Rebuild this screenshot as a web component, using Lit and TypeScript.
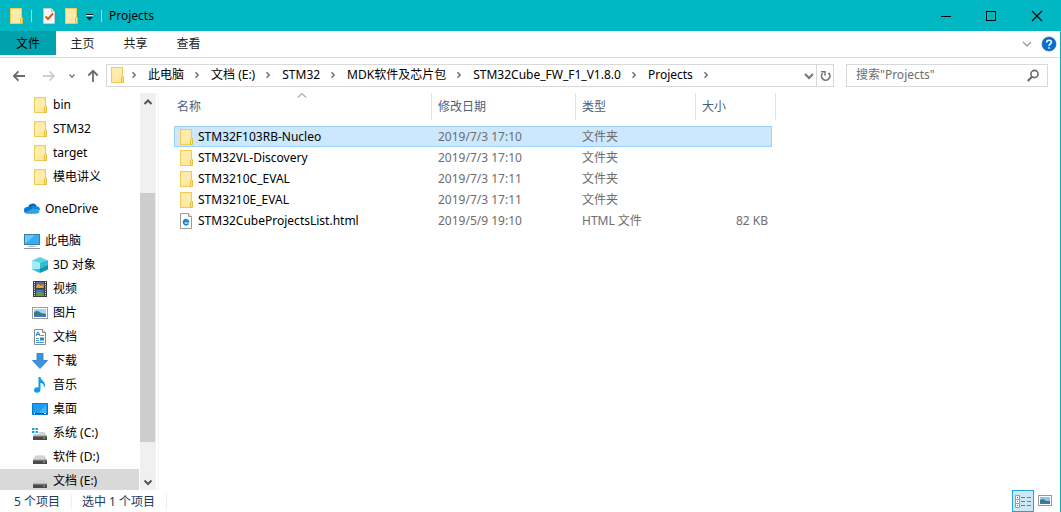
import { LitElement, html, svg, css } from "lit";
import { customElement, state } from "lit/decorators.js";
import { classMap } from "lit/directives/class-map.js";

const glyphs = {
  folder: svg`<rect x="2.5" y="0.5" width="11" height="15" fill="#ffe9a0" stroke="#efcb58"/>
    <path d="M4 2h8v6l-8 5z" fill="#fff0b8" opacity=".5"/>
    <path d="M12.5 15.500v-5l1-1h1v6z" fill="#ffe48c" stroke="#e6bc3c"/>`,
  onedrive: svg`<path d="M4 6.200A4.800 4.800 0 0 1 12.800 5l-5 3z" fill="#0a5cb0"/>
    <path d="M0 9.400A3.300 3.300 0 0 1 3.400 6a4 4 0 0 1 4 .2L12 12.400H3A3 3 0 0 1 0 9.400z" fill="#0f79d3"/>
    <path d="M7 5.800A4.200 4.200 0 0 1 13 5.600 3.400 3.400 0 0 1 16 9l-7-.4z" fill="#1583dc"/>
    <path d="M1.200 11.600 9 7.600l6.800 2.200a2.800 2.800 0 0 1-2.600 2.600H3a3 3 0 0 1-1.800-.8z" fill="#29a5ea"/>`,
  pc: svg`<rect x="0.5" y="1.5" width="15" height="10" fill="#35abf5" stroke="#3b7ba6"/>
    <path d="M1 11 11 2H1z" fill="#6cc6fb"/><path d="M6 12h4v2H6z" fill="#dfe5e9"/>
    <path d="M4 13.500h8" stroke="#b4bec6"/><path d="M0 15.500h16" stroke="#8d9aa5"/>`,
  cube: svg`<path d="M0 3.5 8 6v10L0 12.6z" fill="#28bcd0"/><path d="M8 6l8-2.5v9.1L8 16z" fill="#0896b4"/>
    <path d="M0 3.5 8 0l8 3.5L8 6z" fill="#5fd3df"/><path d="M0 3.500 8 6v6L0 12.600z" fill="#a4edf3"/>
    <path d="M8 6l8-2.500V8L8 12z" fill="#2cbdd2"/>`,
  video: svg`<path d="M1 0h14v16H1z" fill="#3c3c3c"/><path d="M4 1h8v6H4z" fill="#5266a8"/><path d="M4 8.500h8V15H4z" fill="#3f6bd0"/>
    <path d="M4.500 5c1-3 3-3 4 0l3-2v4h-7z" fill="#d8aa30"/><path d="M7 2h3v2H7z" fill="#d84a30"/><path d="M4 12l4-2 4 3v2H4z" fill="#5aa04a"/>
    <path d="M2.500 1v14M13.500 1v14" stroke="#fff" stroke-dasharray="1 1.2"/>`,
  picture: svg`<rect x=".5" y="2.500" width="15" height="11" fill="#fff" stroke="#9b9b9b"/>
    <path d="M2 4h12v8H2z" fill="#a9d3f5"/><path d="M2 7c3-2 5-1 7 1l5 1v3H2z" fill="#3f7a78"/><path d="M2 10l12-.5V12H2z" fill="#3d78bd"/>`,
  doc: svg`<path d="M2.500.5h8l3 3v12h-11z" fill="#fff" stroke="#8a8a8a"/><path d="M10.500.5v3h3" fill="#e4e4e4" stroke="#8a8a8a"/>
    <path d="M4 7 5.500 3h1L8 7M4.500 5.500h3" stroke="#2c86c8" fill="none"/><path d="M8.500 6.500H12M4 9.500h3M4 11.500h3M4 13.500h8" stroke="#3d9ad2"/><path d="M8 8.500h4v3H8z" fill="#2f8a94"/>`,
  download: svg`<path d="M5 .5h6v7h4.500L8 15.500.5 7.500H5z" fill="#3c94e0" stroke="#2878c0" stroke-width=".8"/>`,
  music: svg`<path d="M6.500 0h2c.3 3.500 4.500 4 4.500 8 0 1-.3 2-1 2.600.2-3-1.500-4.600-3.500-4.800v6.700c0 2-1.700 3.300-3.500 3.300C3.500 15.800 2 15 2 13.300c0-2.300 2.400-3.500 4.500-2.800z" fill="#0f9bec"/>`,
  desktop: svg`<path d="M.5 2.500h15v11H.5z" fill="#1e9df2" stroke="#0a78c8"/><path d="M6 13 14 4v9z" fill="#49b4fa"/>
    <path d="M1 12.500h14" stroke="#075aa0"/><path d="M2 12.500h1M12 12.500h2" stroke="#fff"/>`,
  drive: svg`<path d="M3.500 6.500h9L15 11H1z" fill="#d2d2d2"/><path d="M1 11h14v4H1z" fill="#4a4a4a"/><path d="M1 11h14" stroke="#9c9c9c"/><path d="M11 12.500h2v1h-2z" fill="#52e060"/>`,
  system: svg`<path d="M0 3h2.500v2H0zM3.500 3H6v2H3.500zM0 6h2.500v2H0zM3.500 6H6v2H3.500z" fill="#17a8ea"/>
    <path d="M7 7h5.500l2.500 4H1l1.500-2H7z" fill="#d2d2d2"/><path d="M1 11h14v4H1z" fill="#4a4a4a"/><path d="M1 11h14" stroke="#9c9c9c"/><path d="M11 12.500h2v1h-2z" fill="#52e060"/>`,
  page: svg`<path d="M2.500.5h8l3 3v12h-11z" fill="#fff" stroke="#9a9a9a"/><path d="M10.500.5v3h3" fill="#eee" stroke="#9a9a9a"/>
    <path d="M10.300 10.400A2.500 2.500 0 1 1 10.500 8.600H5.800" fill="none" stroke="#1583d8" stroke-width="1.700"/>`,
  check: svg`<path d="M2.500.5h8l3 3v12h-11z" fill="#fbfbfb" stroke="#c9c9c9"/><path d="M10.500.5v3h3" fill="#e2e2e2" stroke="#b9b9b9"/>
    <path d="M4.500 8.500 7 11l5-5.500" fill="none" stroke="#e2541c" stroke-width="2"/>`,
  customize: svg`<path d="M5 6.500h7" stroke="#111"/><path d="M5 7.500h7" stroke="#fff" opacity=".8"/><path d="M5 9h7l-3.500 3.500z" fill="#111"/>`,
  minimize: svg`<path d="M4 8.500h10" stroke="#000"/>`,
  maximize: svg`<rect x="3.500" y="3.500" width="9" height="9" fill="none" stroke="#000"/>`,
  close: svg`<path d="M3 3l10 10M13 3 3 13" stroke="#000" stroke-width="1.100"/>`,
  back: svg`<path d="M14 8H3M7.500 3.300 2.800 8l4.700 4.700" fill="none" stroke="#6a6a6a" stroke-width="1.800"/>`,
  forward: svg`<path d="M2 8h11M8.500 3.300 13.200 8l-4.700 4.700" fill="none" stroke="#d0d0d0" stroke-width="1.800"/>`,
  up: svg`<path d="M8 14V3M3.300 7.500 8 2.800l4.700 4.700" fill="none" stroke="#6a6a6a" stroke-width="1.800"/>`,
  recent: svg`<path d="M5.500 6.500 8 9l2.500-2.500" fill="none" stroke="#808080" stroke-width="1.600"/>`,
  crumb: svg`<path d="M6.500 5.200 9.200 8l-2.700 2.800" fill="none" stroke="#707070" stroke-width="1.500"/>`,
  down: svg`<path d="M5 6l4 4 4-4" fill="none" stroke="#757575" stroke-width="2"/>`,
  ribbon: svg`<path d="M4 6l4 4 4-4" fill="none" stroke="#9a9a9a" stroke-width="1.300"/>`,
  refresh: svg`<path d="M11.500 4.800A4.200 4.200 0 1 1 5.500 5.200" fill="none" stroke="#757575" stroke-width="1.700"/><path d="M4 3.700h4v4" fill="none" stroke="#757575" stroke-width="1.400"/>`,
  search: svg`<circle cx="9.500" cy="6" r="3.600" fill="none" stroke="#666" stroke-width="1.600"/><path d="M7 8.800 2.800 13" stroke="#666" stroke-width="2"/>`,
  help: svg`<circle cx="8" cy="8" r="7" fill="#0b6fd0" stroke="#084f9c" stroke-width=".6"/>
    <path d="M5.700 6.500c0-3 4.700-3 4.700-.3C10.400 8 8.100 7.800 8.100 10M8.100 11.200v1.600" fill="none" stroke="#fff" stroke-width="1.600"/>`,
  scrollUp: svg`<path d="M4.500 10 8 6.500l3.500 3.500" fill="none" stroke="#555" stroke-width="2"/>`,
  scrollDown: svg`<path d="M4.500 6.500 8 10l3.500-3.500" fill="none" stroke="#555" stroke-width="2"/>`,
  sort: svg`<path d="M4 9.500 8 5.500l4 4" fill="none" stroke="#707070"/>`,
  details: svg`<path d="M.5 2.500h4v4h-4zM.5 6.500h4v4h-4zM.5 10.500h4v4h-4z" fill="#fff" stroke="#999"/>
    <path d="M2 4.500h1" stroke="#444"/><path d="M2 8.500h1" stroke="#3878d0"/><path d="M2 12.500h1" stroke="#c03030"/>
    <path d="M6 4.500h4M12 4.500h4M6 8.500h4M12 8.500h4M6 12.500h4M12 12.500h4" stroke="#707b84"/>`,
  thumbs: svg`<rect x="1.500" y="2.500" width="13" height="10" fill="#fff" stroke="#999"/><path d="M3 4h10v7H3z" fill="#8cc4f4"/>
    <path d="M3 7c3-1 4-1 6 1l4 0v3H3z" fill="#3f7a70"/><path d="M3 9.500h10V11H3z" fill="#3d78bd"/>`,
};
type Glyph = keyof typeof glyphs;

const icon = (name: Glyph) =>
  html`<svg class="icon" viewBox="0 0 16 16" width="16" height="16" aria-hidden="true">${glyphs[name]}</svg>`;

interface Place { label: string; glyph: Glyph; root?: boolean; }
interface Entry { name: string; glyph: Glyph; date: string; type: string; size: string; }

const PLACES: Place[] = [
  { label: "bin", glyph: "folder" },
  { label: "STM32", glyph: "folder" },
  { label: "target", glyph: "folder" },
  { label: "模电讲义", glyph: "folder" },
  { label: "OneDrive", glyph: "onedrive", root: true },
  { label: "此电脑", glyph: "pc", root: true },
  { label: "3D 对象", glyph: "cube" },
  { label: "视频", glyph: "video" },
  { label: "图片", glyph: "picture" },
  { label: "文档", glyph: "doc" },
  { label: "下载", glyph: "download" },
  { label: "音乐", glyph: "music" },
  { label: "桌面", glyph: "desktop" },
  { label: "系统 (C:)", glyph: "system" },
  { label: "软件 (D:)", glyph: "drive" },
  { label: "文档 (E:)", glyph: "drive" },
];

const CRUMBS = ["此电脑", "文档 (E:)", "STM32", "MDK软件及芯片包", "STM32Cube_FW_F1_V1.8.0", "Projects"];

const ENTRIES: Entry[] = [
  { name: "STM32F103RB-Nucleo", glyph: "folder", date: "2019/7/3 17:10", type: "文件夹", size: "" },
  { name: "STM32VL-Discovery", glyph: "folder", date: "2019/7/3 17:10", type: "文件夹", size: "" },
  { name: "STM3210C_EVAL", glyph: "folder", date: "2019/7/3 17:11", type: "文件夹", size: "" },
  { name: "STM3210E_EVAL", glyph: "folder", date: "2019/7/3 17:11", type: "文件夹", size: "" },
  { name: "STM32CubeProjectsList.html", glyph: "page", date: "2019/5/9 19:10", type: "HTML 文件", size: "82 KB" },
];

@customElement("app-root")
export class AppRoot extends LitElement {
  @state() private selected = 0;
  @state() private place = 15;

  static styles = css`
    :host {
      display: flex;
      flex-direction: column;
      height: 100vh;
      box-sizing: border-box;
      border-right: 1px solid #00b7c3;
      background: #fff;
      color: #000;
      font: 12px/16px "Noto Sans", "Noto Sans CJK SC", sans-serif;
      overflow: hidden;
    }
    * { box-sizing: border-box; }
    button, input { font: inherit; color: inherit; border: 0; padding: 0; margin: 0; background: none; }
    button { display: inline-flex; align-items: center; justify-content: center; }
    a { color: inherit; text-decoration: none; }
    .icon { display: block; flex: none; }

    .titlebar { display: flex; flex: none; align-items: center; height: 31px; padding-left: 8px; background: #00b7c3; }
    .divider { width: 1px; height: 12px; background: #8fdde2; }
    .quick { display: flex; align-items: center; gap: 7px; padding-right: 4px; }
    .tools { display: flex; gap: 6px; padding-left: 2px; }
    .tools .narrow { margin-left: -4px; }
    .title { margin: 0; padding-left: 7px; font: inherit; }
    .window { display: flex; align-self: stretch; margin-left: auto; }
    .window button { width: 46px; }

    .ribbon { display: flex; flex: none; height: 27px; border-bottom: 1px solid #dadbdc; }
    .ribbon .tab { width: 53px; height: 24px; padding-top: 1px; color: #222; }
    .ribbon .file { width: 56px; background: #00a2ad; color: #000; }
    .ribbon .extra { display: flex; align-items: center; gap: 6px; margin-left: auto; padding-right: 3px; }

    .navbar { display: flex; flex: none; align-items: center; height: 35px; padding: 0 12px 0 11px; }
    .arrows { display: flex; align-items: center; width: 95px; }
    .arrows .forward { margin-left: 14px; }
    .arrows .recent { margin-left: 7px; }
    .arrows .up { margin-left: 5px; }
    .address { display: flex; flex: 1; align-items: center; height: 23px; min-width: 0; padding-left: 2px; border: 1px solid #d9d9d9; }
    .crumbs { display: flex; flex: 1; align-items: center; min-width: 0; margin: 0; padding: 0 0 2px; list-style: none; white-space: nowrap; }
    .crumbs li { display: flex; align-items: center; gap: 5px; padding-left: 6px; }
    .crumbs .start { gap: 1px; padding: 0; }
    .refresh { align-self: stretch; width: 17px; border-left: 1px solid #d9d9d9; }
    .search { display: flex; align-items: center; width: 202px; height: 23px; margin-left: 12px; padding: 0 6px 0 9px; border: 1px solid #d9d9d9; }
    .search input { flex: 1; min-width: 0; padding-bottom: 2px; outline: 0; }
    .search input::placeholder { color: #6d6d6d; opacity: 1; }

    .body { display: flex; flex: 1; min-height: 0; }
    .sidebar { display: flex; flex: none; width: 159px; border-right: 1px solid #f3f3f3; }
    .places { flex: 1; margin: 0; padding: 0; list-style: none; overflow: hidden; }
    .place { display: flex; align-items: center; gap: 5px; height: 24px; padding-left: 32px; }
    .place.root { padding-left: 24px; }
    .root-item { padding-top: 8px; }
    .place.current { background: #d9d9d9; }
    .scrollbar { display: flex; flex-direction: column; width: 16px; margin: 0 2px 0 1px; background: #f0f0f0; }
    .scrollbar button { flex: none; height: 17px; }
    .track { display: flex; flex-direction: column; flex: 1; }
    .before { flex: 83; }
    .thumb { flex: 249; width: 15px; background: #cdcdcd; }
    .after { flex: 31; }

    .files { flex: 1; min-width: 0; padding-left: 15px; overflow: hidden; }
    table { width: 602px; table-layout: fixed; border-spacing: 0; }
    .c-name { width: 257px; }
    .c-date { width: 144px; }
    .c-type { width: 120px; }
    .c-size { width: 77px; }
    th { position: relative; height: 27px; padding: 0 0 0 6px; border-left: 1px solid #e2e2e2; color: #4c607a; font-weight: 400; text-align: left; }
    th.name { padding-left: 3px; border-left: 0; }
    th.end { padding: 0; border-left: 0; border-right: 1px solid #e2e2e2; }
    .sort { position: absolute; top: -5px; left: 50%; margin-left: -9px; }
    .gap td { height: 6px; padding: 0; }
    .row td { height: 21px; padding: 0 0 0 7px; color: #6d6d6d; white-space: nowrap; }
    .row td.name { padding-left: 4px; color: #000; }
    .row td.size { padding: 0 4px 0 0; text-align: right; }
    .row td.end { padding: 0; }
    .file-name { display: flex; align-items: center; gap: 4px; }
    .row.selected td:not(.end) { background: #cce8ff; box-shadow: inset 0 1px #99d1ff, inset 0 -1px #99d1ff; }
    .row.selected td.name { box-shadow: inset 1px 1px #99d1ff, inset 0 -1px #99d1ff; }
    .row.selected td.size { box-shadow: inset -1px 1px #99d1ff, inset 0 -1px #99d1ff; }

    .status { display: flex; flex: none; align-items: center; height: 22px; padding: 0 4px 0 14px; color: #1e395b; }
    .status .info { display: flex; padding-top: 2px; }
    .status .info span { padding-right: 11px; border-right: 1px solid #f0f0f0; }
    .status .info span + span { padding-left: 10px; }
    .views { display: flex; margin-left: auto; }
    .views button { width: 22px; height: 22px; }
    .views .on { border: 1px solid #26a0da; background: #cbe8f6; }
  `;

  private renderPlace(p: Place, i: number) {
    return html`<li class=${classMap({ "root-item": !!p.root })}>
      <a href="#" class=${classMap({ place: true, root: !!p.root, current: i === this.place })}
        @click=${(e: Event) => { e.preventDefault(); this.place = i; }}>${icon(p.glyph)}${p.label}</a>
    </li>`;
  }

  private renderEntry(f: Entry, i: number) {
    return html`<tr class=${classMap({ row: true, selected: i === this.selected })} @click=${() => (this.selected = i)}>
      <td class="name"><span class="file-name">${icon(f.glyph)}${f.name}</span></td>
      <td>${f.date}</td><td>${f.type}</td><td class="size">${f.size}</td><td class="end"></td>
    </tr>`;
  }

  render() {
    return html`
      <header class="titlebar">
        <div class="quick">
          ${icon("folder")}<span class="divider"></span>
          <div class="tools">
            <button aria-label="属性">${icon("check")}</button>
            <button aria-label="新建文件夹">${icon("folder")}</button>
            <button class="narrow" aria-label="自定义快速访问工具栏">${icon("customize")}</button>
          </div>
        </div>
        <span class="divider"></span>
        <h1 class="title">Projects</h1>
        <div class="window">
          <button aria-label="最小化">${icon("minimize")}</button>
          <button aria-label="最大化">${icon("maximize")}</button>
          <button aria-label="关闭">${icon("close")}</button>
        </div>
      </header>
      <nav class="ribbon">
        <button class="tab file">文件</button>
        <button class="tab">主页</button>
        <button class="tab">共享</button>
        <button class="tab">查看</button>
        <div class="extra">
          <button aria-label="展开功能区">${icon("ribbon")}</button>
          <button aria-label="帮助">${icon("help")}</button>
        </div>
      </nav>
      <div class="navbar">
        <div class="arrows">
          <button aria-label="后退">${icon("back")}</button>
          <button class="forward" aria-label="前进">${icon("forward")}</button>
          <button class="recent" aria-label="最近浏览的位置">${icon("recent")}</button>
          <button class="up" aria-label="上移">${icon("up")}</button>
        </div>
        <div class="address">
          <ol class="crumbs">
            <li class="start">${icon("folder")}${icon("crumb")}</li>
            ${CRUMBS.map((c) => html`<li><a href="#">${c}</a>${icon("crumb")}</li>`)}
          </ol>
          <button aria-label="以前的位置">${icon("down")}</button>
          <button class="refresh" aria-label="刷新">${icon("refresh")}</button>
        </div>
        <label class="search">
          <input type="text" placeholder='搜索"Projects"' aria-label="搜索" />${icon("search")}
        </label>
      </div>
      <div class="body">
        <nav class="sidebar">
          <ul class="places">${PLACES.map((p, i) => this.renderPlace(p, i))}</ul>
          <div class="scrollbar">
            <button aria-label="向上滚动">${icon("scrollUp")}</button>
            <div class="track"><div class="before"></div><div class="thumb"></div><div class="after"></div></div>
            <button aria-label="向下滚动">${icon("scrollDown")}</button>
          </div>
        </nav>
        <main class="files">
          <table>
            <colgroup><col class="c-name" /><col class="c-date" /><col class="c-type" /><col class="c-size" /><col /></colgroup>
            <thead>
              <tr>
                <th class="name">名称<span class="sort">${icon("sort")}</span></th>
                <th>修改日期</th><th>类型</th><th>大小</th><th class="end"></th>
              </tr>
            </thead>
            <tbody>
              <tr class="gap"><td colspan="5"></td></tr>
              ${ENTRIES.map((f, i) => this.renderEntry(f, i))}
            </tbody>
          </table>
        </main>
      </div>
      <footer class="status">
        <div class="info"><span>5 个项目</span><span>选中 1 个项目</span></div>
        <div class="views">
          <button class="on" aria-label="详细信息">${icon("details")}</button>
          <button aria-label="大图标">${icon("thumbs")}</button>
        </div>
      </footer>
    `;
  }
}
